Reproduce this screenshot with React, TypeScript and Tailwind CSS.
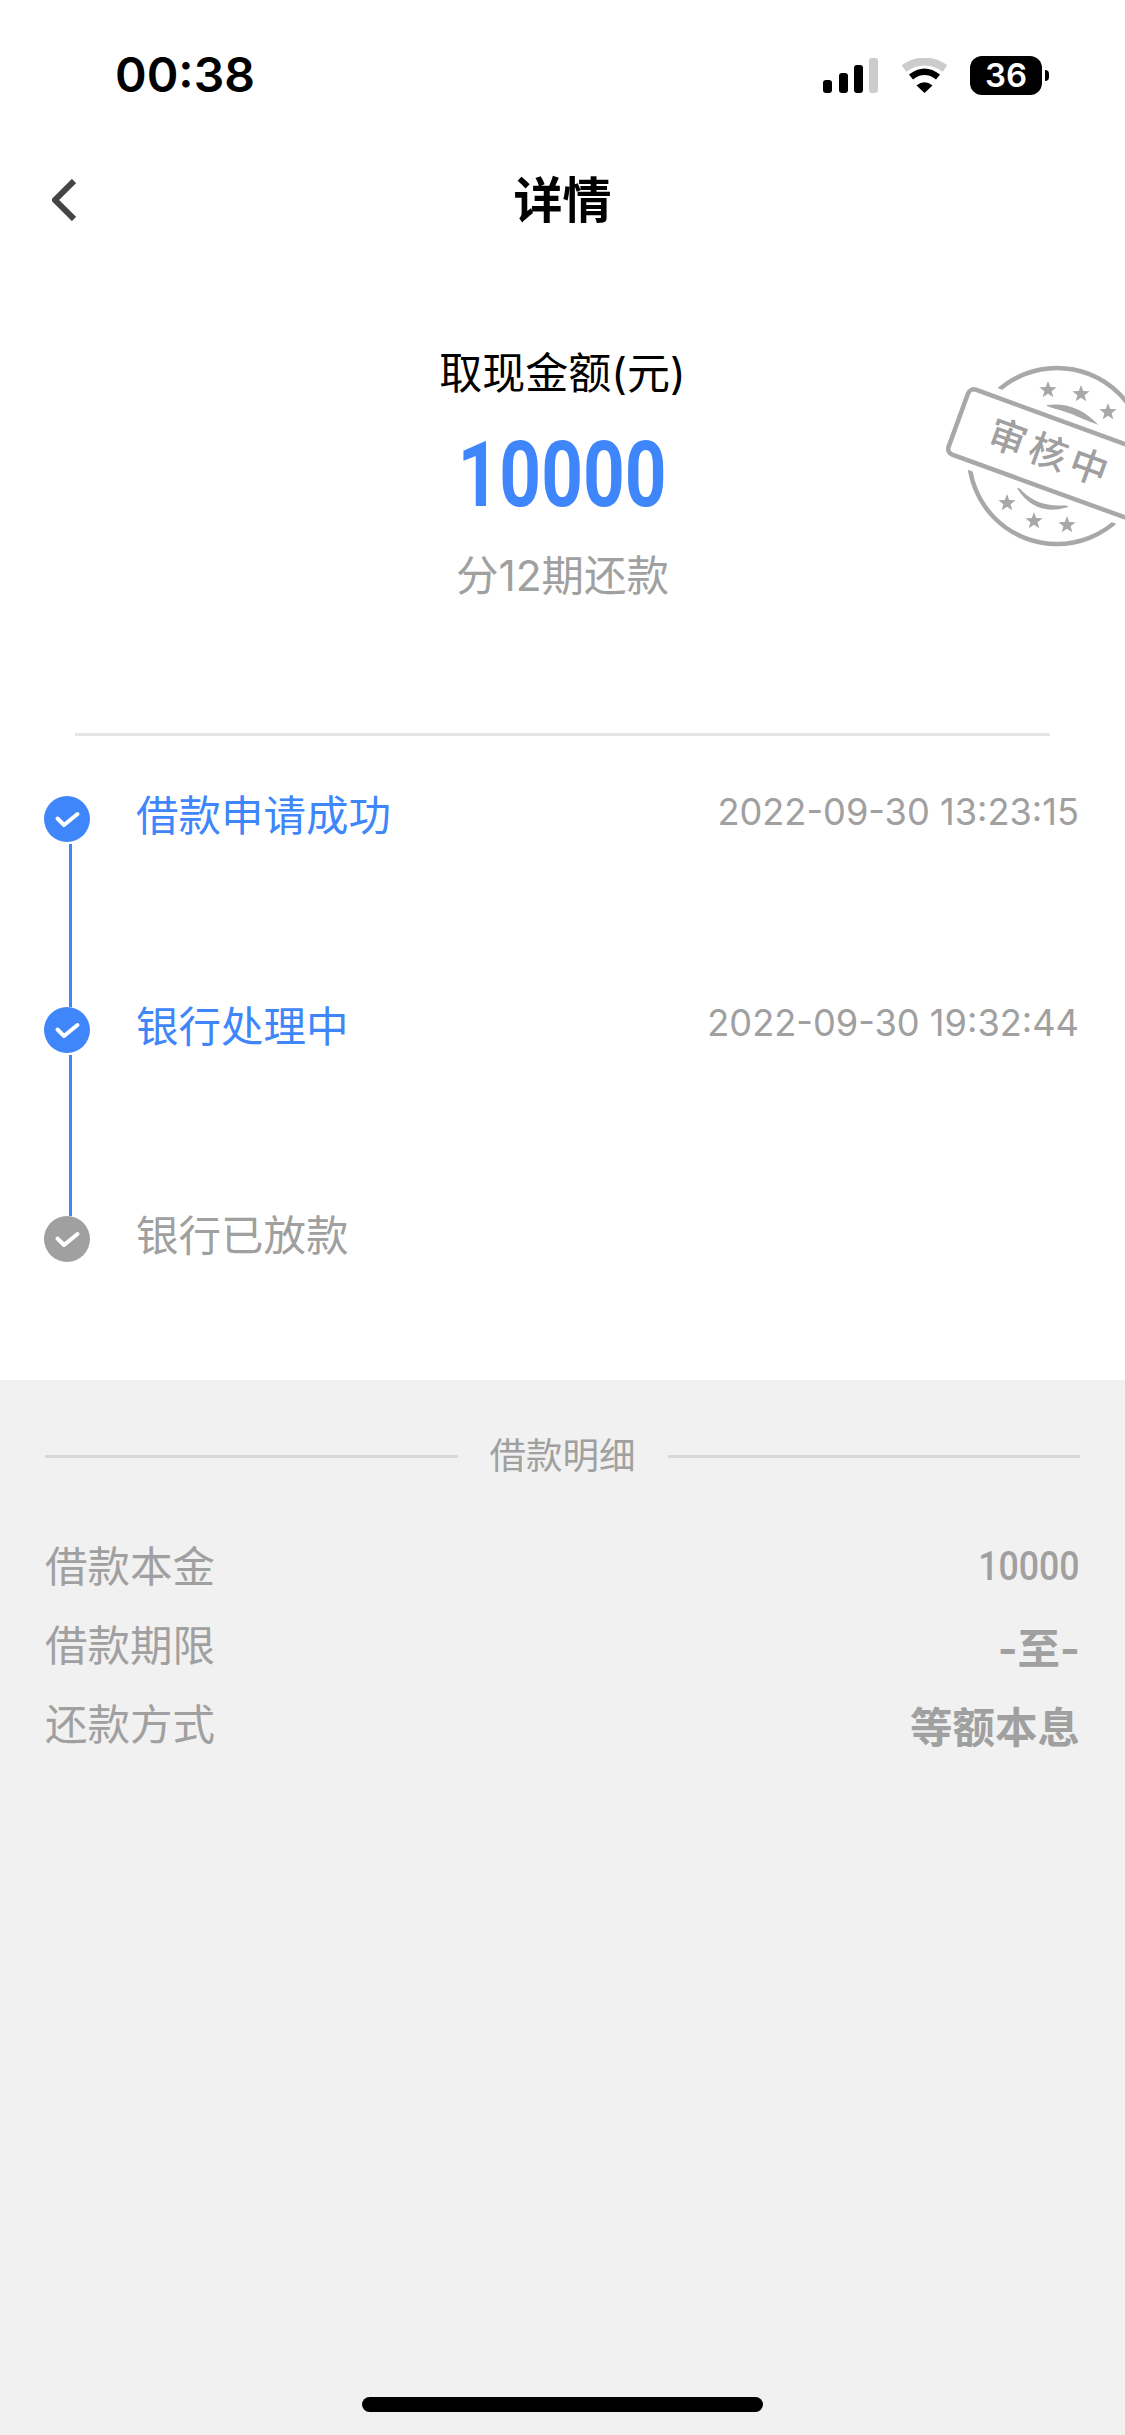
const CJK = 'font-["Inter","Noto_Sans_CJK_SC",sans-serif]';

function Check({ gray = false }: { gray?: boolean }) {
  return (
    <svg width="46" height="46" viewBox="0 0 46 46" className="shrink-0">
      <circle cx="23" cy="23" r="23" fill={gray ? '#a0a0a0' : '#3f86fa'} />
      <path d="M13.5 22.5L20 29L33.5 18" fill="none" stroke="#fff" strokeWidth="4" strokeLinecap="round" strokeLinejoin="round" />
    </svg>
  );
}

function Star({ x, y, r = 9 }: { x: number; y: number; r?: number }) {
  const pts: string[] = [];
  for (let i = 0; i < 10; i++) {
    const a = (-90 + i * 36) * (Math.PI / 180);
    const d = i % 2 === 0 ? r : r * 0.42;
    pts.push(`${(x + d * Math.cos(a)).toFixed(1)},${(y + d * Math.sin(a)).toFixed(1)}`);
  }
  return <polygon points={pts.join(' ')} fill="#a8a8a8" />;
}

function Stamp() {
  return (
    <svg width="200" height="210" viewBox="925 350 200 210" className="absolute right-0 top-[100px]">
      <circle cx="1057" cy="456" r="88" fill="none" stroke="#a8a8a8" strokeWidth="4.5" />
      <Star x={1048} y={390} />
      <Star x={1081} y={394} />
      <Star x={1108} y={412} />
      <Star x={1007} y={503} />
      <Star x={1034} y={521} />
      <Star x={1067} y={525} />
      <path d="M1047 406Q1076 402 1098 426Q1074 411 1047 406Z" fill="#a8a8a8" stroke="#a8a8a8" strokeWidth="2" />
      <path d="M1018 488Q1036 510 1068 506Q1036 516 1018 488Z" fill="#a8a8a8" stroke="#a8a8a8" strokeWidth="2" />
      <g transform="rotate(20 1057 456)">
        <rect x="952" y="421.5" width="210" height="69" rx="6" fill="#fff" stroke="#fff" strokeWidth="18" />
        <rect x="952" y="421.5" width="210" height="69" rx="6" fill="#fff" stroke="#a8a8a8" strokeWidth="4.5" />
        <text x="1050" y="469" textAnchor="middle" fontSize="38" letterSpacing="5" fill="#a0a0a0" fontWeight="500" fontFamily="'Noto Sans CJK SC', sans-serif">
          审核中
        </text>
      </g>
    </svg>
  );
}

function StatusBar() {
  return (
    <div className="flex h-[150px] items-center justify-between pl-[115px] pr-[76px]">
      <span className="text-[48px] font-semibold leading-none text-black">00:38</span>
      <div className="flex items-center">
        <svg width="55" height="35" viewBox="0 0 55 35" className="mr-[23px]">
          <rect x="0" y="22" width="9" height="13" rx="3" fill="#000" />
          <rect x="16" y="15" width="9" height="20" rx="3" fill="#000" />
          <rect x="31" y="7" width="9" height="28" rx="3" fill="#000" />
          <rect x="46" y="0" width="9" height="35" rx="3" fill="#ccc" />
        </svg>
        <svg width="47" height="35" viewBox="0 0 47 35" className="mr-[22px]">
          <path d="M3 10.5Q23.5 -3.5 44 10.5" fill="none" stroke="#ccc" strokeWidth="8" />
          <path d="M10 19Q23.5 8.5 37 19" fill="none" stroke="#000" strokeWidth="6.5" />
          <path d="M23.5 35L15.5 27.5Q23.5 21 31.5 27.5Z" fill="#000" />
        </svg>
        <div className="flex h-[39px] w-[72px] items-center justify-center rounded-[12px] bg-black text-[33px] font-semibold leading-none text-white">
          36
        </div>
        <div className="ml-[3px] h-[11px] w-[4px] rounded-r-full bg-black" />
      </div>
    </div>
  );
}

function NavBar() {
  return (
    <div className="grid h-[100px] grid-cols-[1fr_auto_1fr] items-center pl-[52px]">
      <svg width="24" height="42" viewBox="0 0 24 42">
        <path d="M22 2L3 21L22 40" fill="none" stroke="#444" strokeWidth="6" />
      </svg>
      <span className="-ml-[52px] text-[49px] font-bold leading-none text-black">详情</span>
      <span />
    </div>
  );
}

function Summary() {
  return (
    <div className="relative flex flex-col items-center pt-[93px]">
      <Stamp />
      <div className="h-[60px] text-[43px] leading-[60px] text-black">取现金额(元)</div>
      <div className="mt-[23px] h-[100px] scale-x-[0.81] font-['Roboto',sans-serif] text-[90px] font-bold leading-[100px] text-[#3f86fa]">
        10000
      </div>
      <div className="mt-[20px] h-[60px] text-[42.5px] leading-[60px] text-[#a0a0a0]">分12期还款</div>
      <div className="mt-[127px] h-[3px] w-[975px] bg-[#e5e5e5]" />
    </div>
  );
}

function Timeline() {
  const steps = [
    { label: '借款申请成功', time: '2022-09-30 13:23:15', height: 'h-[211px]' },
    { label: '银行处理中', time: '2022-09-30 19:32:44', height: 'h-[209px]' },
  ];

  return (
    <div className="flex h-[644px] flex-col pl-[44px] pr-[46px] pt-[60px]">
      {steps.map((step) => (
        <div key={step.label} className={`flex ${step.height}`}>
          <div className="flex w-[46px] flex-col">
            <Check />
            <div className="ml-[25px] mt-[2px] w-[3px] flex-1 bg-[#3f86fa]" />
          </div>
          <div className="ml-[46px] flex h-[46px] flex-1 items-center justify-between">
            <span className="-translate-y-[3px] text-[42.5px] leading-none text-[#3f86fa]">{step.label}</span>
            <span className="-translate-y-[7px] text-[36.2px] leading-none text-[#a0a0a0]">{step.time}</span>
          </div>
        </div>
      ))}
      <div className="flex">
        <Check gray />
        <span className="ml-[46px] -translate-y-[3px] text-[42.5px] leading-[46px] text-[#a0a0a0]">银行已放款</span>
      </div>
    </div>
  );
}

function Details() {
  return (
    <div className="flex-1 bg-[#f1f1f1] px-[45px] pt-[50px]">
      <div className="flex h-[52px] items-center gap-[32px]">
        <div className="h-[3px] flex-1 bg-[#d8d8d8]" />
        <span className="text-[36.5px] leading-none text-[#a0a0a0]">借款明细</span>
        <div className="h-[3px] flex-1 bg-[#d8d8d8]" />
      </div>
      <div className="mt-[45px] text-[42.5px] text-[#a0a0a0]">
        <div className="flex h-[79px] items-center justify-between">
          <span>借款本金</span>
          <span className="origin-right scale-x-[0.87] font-['Roboto',sans-serif] text-[41px] font-medium">10000</span>
        </div>
        <div className="flex h-[79px] items-center justify-between">
          <span>借款期限</span>
          <span className="translate-y-[3px] font-bold">-至-</span>
        </div>
        <div className="flex h-[79px] items-center justify-between">
          <span>还款方式</span>
          <span className="translate-y-[3px] font-bold">等额本息</span>
        </div>
      </div>
    </div>
  );
}

export default function App() {
  return (
    <div className={`relative flex min-h-screen w-full flex-col bg-white ${CJK}`}>
      <StatusBar />
      <NavBar />
      <Summary />
      <Timeline />
      <Details />
      <div className="absolute bottom-[23px] left-[362px] h-[15px] w-[401px] rounded-full bg-black" />
    </div>
  );
}
